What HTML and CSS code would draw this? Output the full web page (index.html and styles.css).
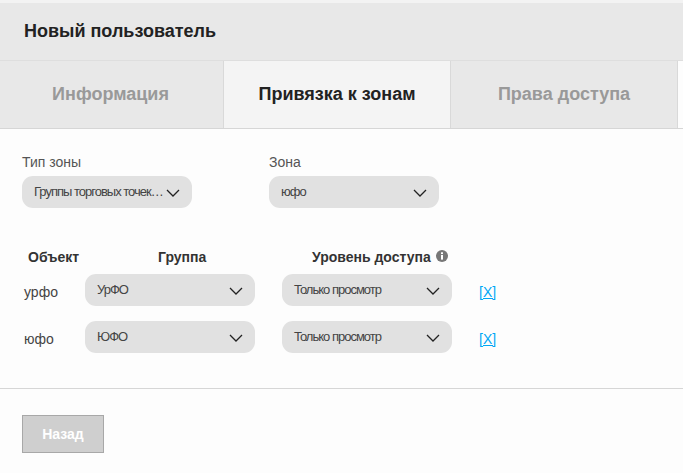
FILE: index.html
```html
<!DOCTYPE html>
<html lang="ru">
<head>
	<title>Новый пользователь</title>
	<meta charset="UTF-8">
	<meta name="viewport" content="width=device-width, initial-scale=1">
	<link rel="stylesheet" href="styles.css">
</head>
<body>
	<svg class="defs" width="0" height="0">
		<symbol id="chevron" viewBox="0 0 14 8">
			<path d="M1 1l6 6 6-6" fill="none" stroke="#222" stroke-width="1.3"/>
		</symbol>
	</svg>
	<div class="title">Новый пользователь</div>
	<div class="tabs">
		<div class="tab tab-first">Информация</div>
		<div class="tab tab-active">Привязка к зонам</div>
		<div class="tab">Права доступа</div>
	</div>
	<div class="filters">
		<div class="filter">
			<div class="filter-label">Тип зоны</div>
			<div class="select">
				<span class="select-text">Группы торговых точек…</span>
				<svg class="chevron"><use href="#chevron"/></svg>
			</div>
		</div>
		<div class="filter">
			<div class="filter-label">Зона</div>
			<div class="select">
				<span class="select-text">юфо</span>
				<svg class="chevron"><use href="#chevron"/></svg>
			</div>
		</div>
	</div>
	<div class="zones">
		<div class="zones-head">
			<div class="head-object">Объект</div>
			<div class="head-group">Группа</div>
			<div class="head-level">Уровень доступа
				<svg class="info" viewBox="0 0 12 12">
					<circle cx="6" cy="6" r="6" fill="#777"/>
					<rect x="5" y="5" width="2" height="4.6" fill="#fff"/>
					<rect x="5" y="2.3" width="2" height="1.8" fill="#fff"/>
				</svg>
			</div>
		</div>
		<div class="zone-row">
			<div class="zone-name">урфо</div>
			<div class="select">
				<span class="select-text">УрФО</span>
				<svg class="chevron"><use href="#chevron"/></svg>
			</div>
			<div class="select">
				<span class="select-text">Только просмотр</span>
				<svg class="chevron"><use href="#chevron"/></svg>
			</div>
			<a class="remove" href="#">[X]</a>
		</div>
		<div class="zone-row">
			<div class="zone-name">юфо</div>
			<div class="select">
				<span class="select-text">ЮФО</span>
				<svg class="chevron"><use href="#chevron"/></svg>
			</div>
			<div class="select">
				<span class="select-text">Только просмотр</span>
				<svg class="chevron"><use href="#chevron"/></svg>
			</div>
			<a class="remove" href="#">[X]</a>
		</div>
	</div>
	<div class="footer">
		<button class="back" type="button">Назад</button>
	</div>
</body>
</html>
```
FILE: styles.css
```css
html, body {
	height: 100%;
}
body {
	margin: 0;
	background: #fdfdfd;
	color: #333;
	font-family: "Liberation Sans", Arial, sans-serif;
	overflow: hidden;
}
.defs {
	display: block;
}
.title {
	height: 58px;
	margin-top: 3px;
	padding-left: 24px;
	box-sizing: border-box;
	border-bottom: 1px solid #dedede;
	background: #e8e8e8;
	color: #222;
	font-size: 18px;
	font-weight: bold;
	line-height: 57px;
	box-shadow: 0 -3px 0 #f3f3f3;
}
.tabs {
	display: flex;
	height: 68px;
	box-sizing: border-box;
	border-bottom: 1px solid #d6d6d6;
}
.tab {
	width: 227px;
	box-sizing: border-box;
	border-right: 1px solid #d9d9d9;
	background: #e8e8e8;
	color: #999;
	font-size: 18px;
	font-weight: bold;
	line-height: 66px;
	text-align: center;
}
.tab-first {
	width: 224px;
	padding-right: 2px;
}
.tab-active {
	background: #f4f4f4;
	color: #222;
}
.filters {
	display: flex;
	gap: 77px;
	padding: 25px 0 0 22px;
}
.filter-label {
	margin-bottom: 6px;
	color: #555;
	font-size: 14px;
	line-height: 16px;
}
.select {
	display: flex;
	align-items: center;
	justify-content: space-between;
	width: 170px;
	height: 32px;
	padding: 0 12px;
	box-sizing: border-box;
	border-radius: 11px;
	background: #e1e1e1;
	color: #444;
	font-size: 13px;
	letter-spacing: -1px;
}
.select-text {
	margin-top: -2px;
	white-space: nowrap;
}
.chevron {
	flex: none;
	width: 14px;
	height: 8px;
	margin-top: 2px;
}
.zones {
	padding: 40px 0 35px 24px;
	border-bottom: 1px solid #d6d6d6;
}
.zones-head {
	display: flex;
	color: #333;
	font-size: 14px;
	font-weight: bold;
	line-height: 18px;
}
.head-object {
	width: 134px;
	padding-left: 4px;
	box-sizing: border-box;
}
.head-group {
	width: 154px;
}
.info {
	width: 12px;
	height: 12px;
	margin-left: 1px;
}
.zone-row {
	display: flex;
	align-items: center;
	margin-top: 15px;
}
.zones-head + .zone-row {
	margin-top: 8px;
}
.zone-row .select {
	margin-right: 27px;
}
.zone-name {
	width: 61px;
	margin-top: 4px;
	color: #444;
	font-size: 14px;
}
.remove {
	margin-top: 4px;
	color: #00a8f5;
	font-size: 14px;
}
.footer {
	padding: 26px 22px;
}
.back {
	width: 82px;
	height: 38px;
	padding: 0;
	border: 1px solid #a8a8a8;
	background: #cfcfcf;
	color: #fff;
	font-family: inherit;
	font-size: 14px;
	font-weight: bold;
}
```
